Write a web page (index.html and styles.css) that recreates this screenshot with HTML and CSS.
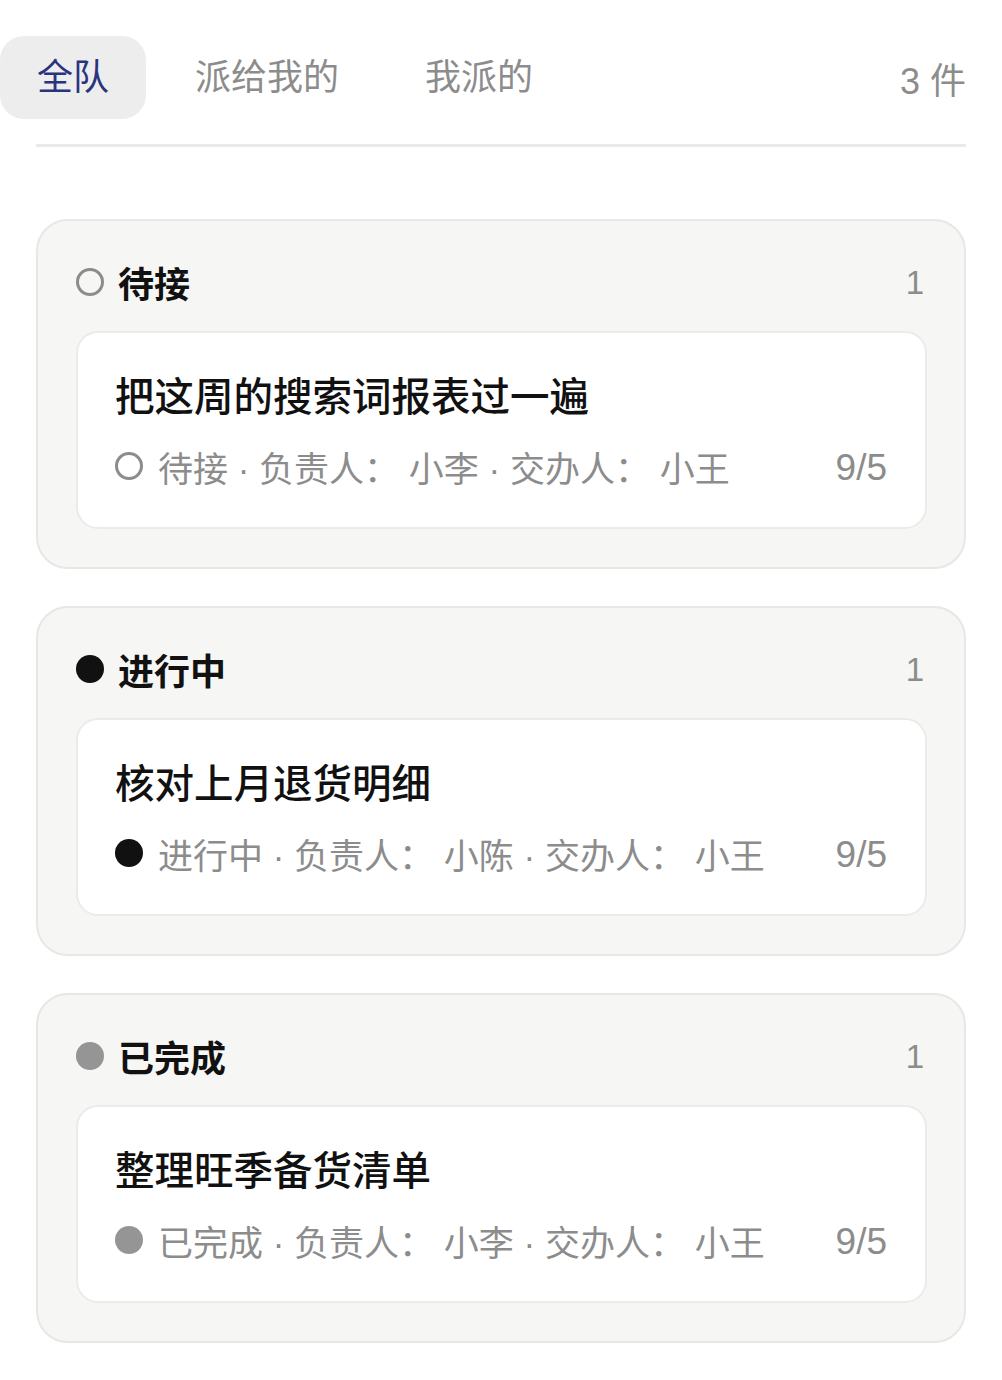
FILE: index.html
```html
<!DOCTYPE html>
<html lang="zh-CN">
<head>
<meta charset="utf-8">
<title>任务</title>
<link rel="stylesheet" href="styles.css">
</head>
<body>
<div class="page">
  <div class="tabbar">
    <div class="tabs">
      <div class="tab active">全队</div>
      <div class="tab">派给我的</div>
      <div class="tab">我派的</div>
      <div class="total">3 件</div>
    </div>
  </div>

  <div class="groups">
    <section class="group">
      <div class="group-head">
        <span class="dot dot-open"></span>
        <span class="group-title">待接</span>
        <span class="group-count">1</span>
      </div>
      <div class="card">
        <div class="card-title">把这周的搜索词报表过一遍</div>
        <div class="meta">
          <span class="dot dot-open"></span>
          <span class="meta-text">待接 · 负责人： 小李 · 交办人： 小王</span>
          <span class="date">9/5</span>
        </div>
      </div>
    </section>

    <section class="group">
      <div class="group-head">
        <span class="dot dot-doing"></span>
        <span class="group-title">进行中</span>
        <span class="group-count">1</span>
      </div>
      <div class="card">
        <div class="card-title">核对上月退货明细</div>
        <div class="meta">
          <span class="dot dot-doing"></span>
          <span class="meta-text">进行中 · 负责人： 小陈 · 交办人： 小王</span>
          <span class="date">9/5</span>
        </div>
      </div>
    </section>

    <section class="group">
      <div class="group-head">
        <span class="dot dot-done"></span>
        <span class="group-title">已完成</span>
        <span class="group-count">1</span>
      </div>
      <div class="card">
        <div class="card-title">整理旺季备货清单</div>
        <div class="meta">
          <span class="dot dot-done"></span>
          <span class="meta-text">已完成 · 负责人： 小李 · 交办人： 小王</span>
          <span class="date">9/5</span>
        </div>
      </div>
    </section>
  </div>
</div>
</body>
</html>
```

FILE: styles.css
```css
* { box-sizing: border-box; }

html, body {
  margin: 0;
  padding: 0;
  background: #ffffff;
}

body {
  font-family: "Liberation Sans", "Noto Sans CJK SC", sans-serif;
  color: #111111;
}

.page {
  padding: 36px 36px 40px 36px;
}

.tabbar {
  padding-bottom: 25px;
  border-bottom: 3px solid #e9e9e7;
}

.tabs {
  display: flex;
  align-items: center;
  gap: 12px;
  margin-left: -36px;
}

.tab {
  height: 83px;
  line-height: 83px;
  padding: 0 37px;
  border-radius: 24px;
  font-size: 36px;
  color: #8c8c8c;
}

.tab.active {
  background: #ededed;
  color: #29347f;
}

.total {
  margin-left: auto;
  font-size: 36px;
  color: #8c8c8c;
}

.groups {
  margin-top: 72px;
  display: flex;
  flex-direction: column;
  gap: 37px;
}

.group {
  background: #f6f6f4;
  border: 2px solid #e7e7e5;
  border-radius: 32px;
  padding: 38px 37px 38px 38px;
}

.group-head {
  display: flex;
  align-items: center;
  height: 46px;
}

.group-title {
  margin-left: 14px;
  font-size: 36px;
  font-weight: 600;
  color: #111111;
}

.group-count {
  margin-left: auto;
  margin-right: 3px;
  padding-top: 2px;
  font-size: 33px;
  color: #8c8c8c;
}

.dot {
  flex: none;
  width: 28px;
  height: 28px;
  border-radius: 50%;
}

.dot-open {
  border: 3px solid #8c8c8c;
}

.dot-doing {
  background: #111111;
}

.dot-done {
  background: #959595;
}

.card {
  margin-top: 26px;
  background: #ffffff;
  border: 2px solid #ebebe9;
  border-radius: 22px;
  padding: 41px 38px 38px 37px;
}

.card-title {
  height: 46px;
  line-height: 46px;
  font-size: 39.5px;
  font-weight: 500;
  color: #111111;
}

.meta {
  margin-top: 23px;
  height: 46px;
  display: flex;
  align-items: center;
}

.meta-text {
  margin-left: 15px;
  font-size: 35px;
  color: #8c8c8c;
  white-space: nowrap;
}

.date {
  margin-left: auto;
  padding-top: 3px;
  font-size: 37px;
  color: #8c8c8c;
}
```
